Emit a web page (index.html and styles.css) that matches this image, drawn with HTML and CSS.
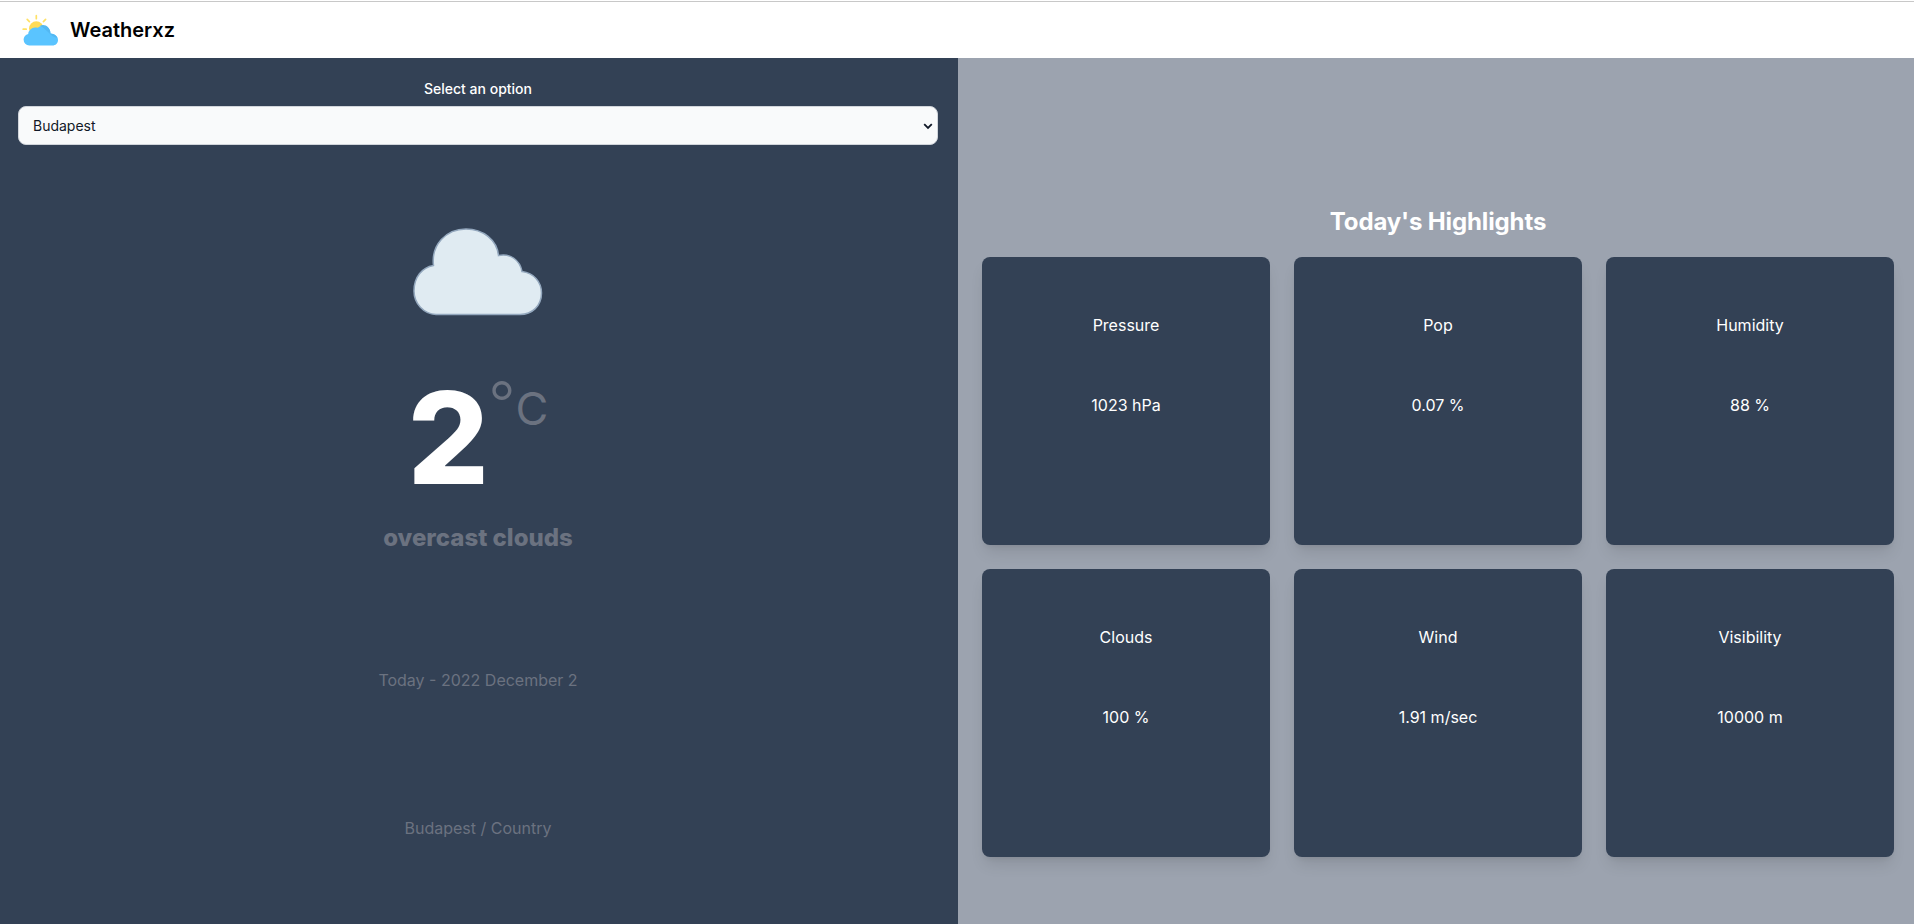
FILE: index.html
```
<!DOCTYPE html>
<html lang="en">
<head>
<meta charset="utf-8">
<title>Weatherxz</title>
<link rel="stylesheet" href="styles.css">
</head>
<body>
<header class="navbar">
  <svg class="logo" viewBox="0 0.8 36 36" aria-hidden="true">
    <g stroke="#ffe166" stroke-width="1.7" stroke-linecap="round">
      <path d="M14.300 4.500v3M5.200 8.200l2.200 2.200M23.600 8.200l-2.200 2.200M1.200 18h3"/>
    </g>
    <circle cx="14.300" cy="17.400" r="7.300" fill="#ffdb57"/>
    <path d="M7.300 34.200a5.700 5.700 0 0 1-5.700-5.800c0-2.900 2-5.200 4.600-5.700A7.200 7.200 0 0 1 13 16.200c1.100 0 1.900.1 2.800.4a7.600 7.600 0 0 1 12.700 5.600c3.800.1 7.500 2.500 7.500 6.500 0 3.300-2.500 5.500-5.500 5.500z" fill="#5ac4ff"/>
    <path d="M18 14.600c4-2.600 10.300.4 10.500 7.600 3.400.2 6 2 6.800 4.600-6.500-1-10.300-8.500-17.300-12.200z" fill="#54b8f2"/>
  </svg>
  <span class="brand">Weatherxz</span>
</header>
<main class="layout">
  <section class="today">
    <label class="label" for="city">Select an option</label>
    <div class="field">
      <select class="select" id="city"><option>Budapest</option></select>
      <svg class="chevron" viewBox="0 0 10 7" aria-hidden="true"><path d="M1.200 1.200L5 5L8.800 1.200" fill="none" stroke="#111827" stroke-width="1.800"/></svg>
    </div>
    <svg class="cloud" viewBox="0 0 130 88" aria-hidden="true">
      <path d="M23 86.500A23 23.500 0 0 1 1 63C1 49 9 39.500 20.500 37.500C18 17 33 1 53 1C70 1 84 12 85.500 27.500C97 25 107 32 109 43.500C121 45 128.500 54 128.500 65C128.500 78 119 86.500 107 86.500Z" fill="#e0ebf2" stroke="#94a8be" stroke-width="1.500"/>
    </svg>
    <div class="temperature"><span class="degrees">2</span><span class="unit"><span class="ring">°</span><span class="scale">C</span></span></div>
    <p class="description">overcast clouds</p>
    <p class="date">Today - 2022 December 2</p>
    <p class="place">Budapest / Country</p>
  </section>
  <section class="highlights">
    <h2 class="heading">Today's Highlights</h2>
    <div class="cards">
      <article class="card"><p>Pressure</p><p>1023 hPa</p></article>
      <article class="card"><p>Pop</p><p>0.07 %</p></article>
      <article class="card"><p>Humidity</p><p>88 %</p></article>
      <article class="card"><p>Clouds</p><p>100 %</p></article>
      <article class="card"><p>Wind</p><p>1.91 m/sec</p></article>
      <article class="card"><p>Visibility</p><p>10000 m</p></article>
    </div>
  </section>
</main>
</body>
</html>
```
FILE: styles.css
```
* { box-sizing: border-box; margin: 0; }
body { font: 16px/24px Inter, "Noto Sans", sans-serif; color: #fff; background: #fff; height: 924px; display: flex; flex-direction: column; overflow: hidden; }
.navbar { height: 58px; flex: none; padding: 0 22px; display: flex; align-items: center; gap: 12px; color: #000; border-top: 1px solid #fff; background: linear-gradient(#c8c8c8 0 1px, #fff 1px); background-clip: padding-box; }
.logo { width: 36px; height: 36px; }
.brand { font-size: 20px; line-height: 28px; font-weight: 600; }
.layout { flex: 1; display: grid; grid-template-columns: 958px 956px; }
.today { background: #334155; display: flex; flex-direction: column; align-items: center; padding: 21px 20px 0 18px; }
.label { font-size: 14px; line-height: 20px; font-weight: 500; margin-bottom: 7px; }
.field { position: relative; width: 100%; height: 39px; }
.select { appearance: none; display: block; width: 100%; height: 39px; font: 14px/20px Inter, sans-serif; color: #111827; background: #f9fafb; border: 1px solid #d1d5db; border-radius: 8px; padding: 8px 14px; }
.chevron { position: absolute; right: 5px; top: 17px; width: 10px; height: 7px; }
.cloud { width: 130px; height: 88px; margin-top: 83px; }
.temperature { display: flex; height: 128px; margin-top: 58px; }
.degrees { font-size: 128px; line-height: 128px; font-weight: 800; letter-spacing: -1px; }
.unit { display: flex; color: #6b7280; line-height: 48px; }
.ring { font-size: 60px; font-weight: 300; padding-top: 5px; }
.scale { font-size: 45px; font-weight: 400; padding-top: 11px; }
.description { margin-top: 20px; font-size: 24px; line-height: 32px; font-weight: 800; color: #6b7280; }
.date { margin-top: 114px; color: #6b7280; }
.place { margin-top: 124px; color: #6b7280; }
.highlights { background: #9ca3af; padding: 148px 20px 0 24px; }
.heading { text-align: center; font-size: 24px; line-height: 32px; font-weight: 700; letter-spacing: -0.13px; margin-bottom: 19px; }
.cards { display: grid; grid-template-columns: repeat(3, 288px); grid-auto-rows: 288px; gap: 24px; }
.card { background: #334155; border-radius: 8px; padding: 56px 0; display: flex; flex-direction: column; align-items: center; gap: 56px; box-shadow: 0 10px 15px -3px rgba(0,0,0,.1), 0 4px 6px -4px rgba(0,0,0,.1); }
```
